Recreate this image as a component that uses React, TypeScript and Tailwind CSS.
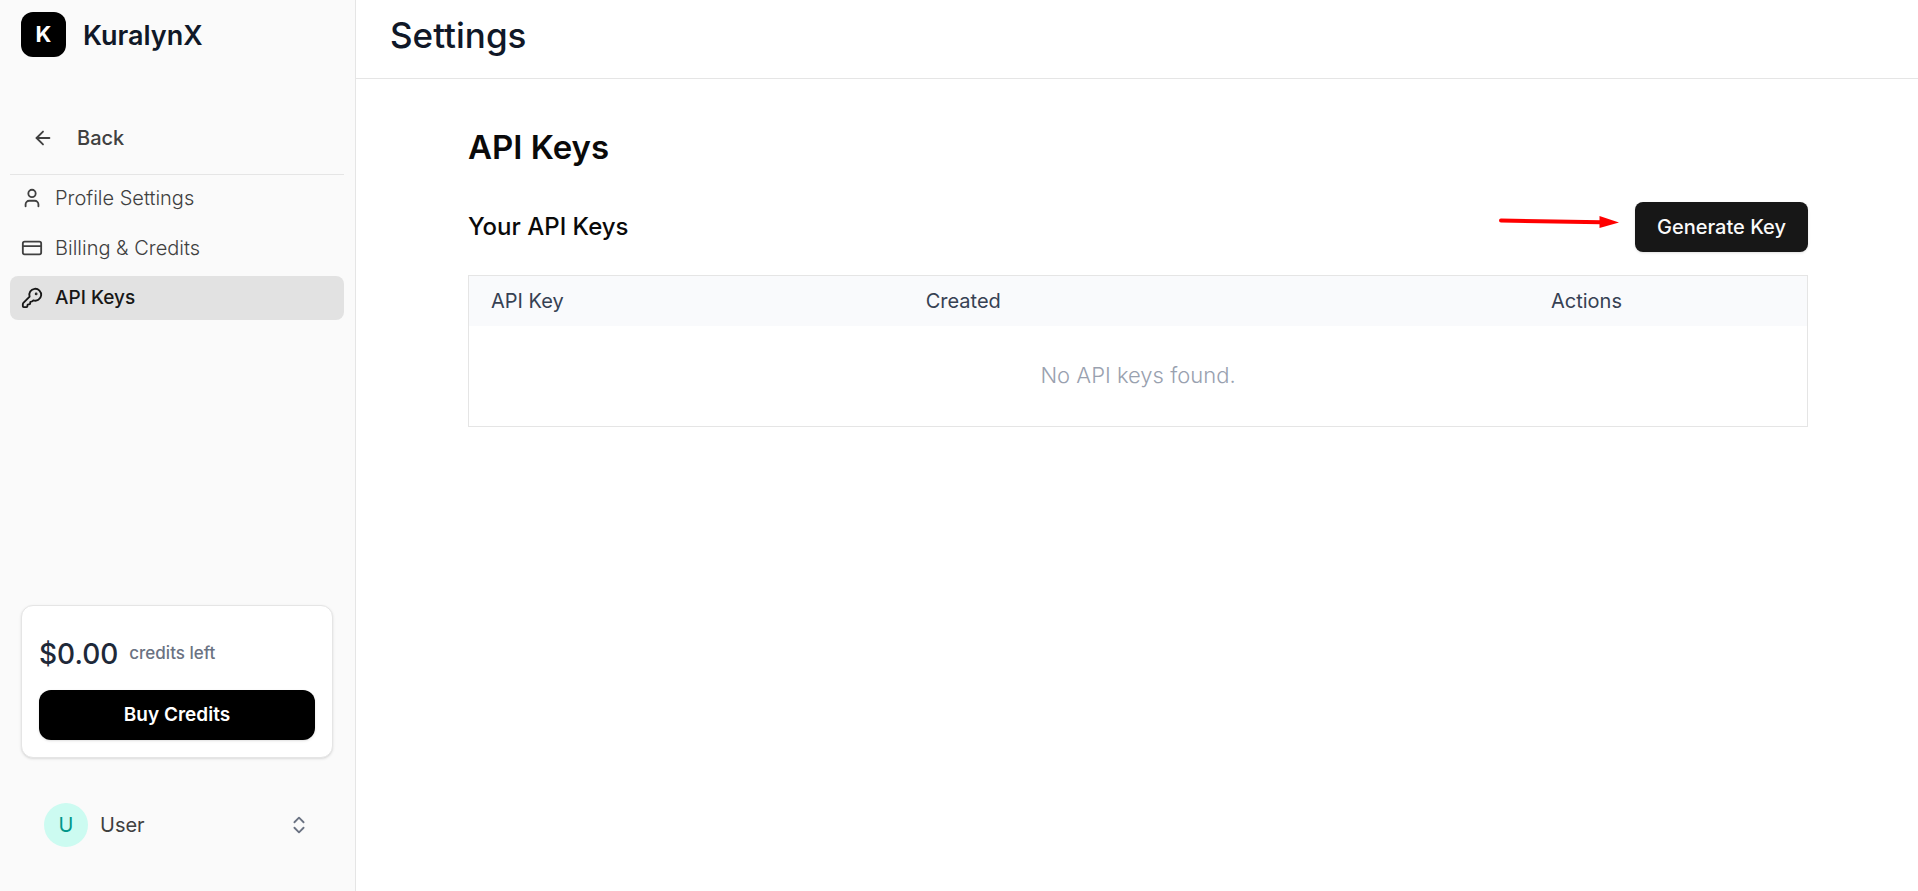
import { ArrowLeft, ChevronsUpDown, CreditCard, KeyRound, User } from "lucide-react";
import type { LucideIcon } from "lucide-react";

type NavItem = { label: string; icon: LucideIcon; active?: boolean };

const navItems: NavItem[] = [
  { label: "Profile Settings", icon: User },
  { label: "Billing & Credits", icon: CreditCard },
  { label: "API Keys", icon: KeyRound, active: true },
];

function NavLink({ label, icon: Icon, active }: NavItem) {
  return (
    <a
      href="#"
      aria-current={active ? "page" : undefined}
      className={
        active
          ? "flex h-11 items-center gap-3 rounded-lg bg-[#e2e2e2] px-[11px] text-[19px] font-medium text-neutral-900"
          : "flex h-11 items-center gap-3 rounded-lg px-[11px] text-[20px] font-light text-neutral-700"
      }
    >
      <Icon size={22} strokeWidth={2} />
      <span>{label}</span>
    </a>
  );
}

function Sidebar() {
  return (
    <aside className="flex w-[356px] shrink-0 flex-col border-r border-neutral-200 bg-neutral-50">
      <div className="flex items-center gap-[17px] px-[21px] pt-3">
        <div className="flex size-[45px] items-center justify-center rounded-xl bg-black text-[22px] font-bold text-white">
          K
        </div>
        <span className="pt-1 text-[27px] font-semibold text-gray-900">KuralynX</span>
      </div>

      <nav className="mt-[59px] pr-[11px] pl-[10px]">
        <a href="#" className="flex h-11 items-center gap-[23px] px-[22px] text-[20px] font-medium text-neutral-700">
          <ArrowLeft size={22} strokeWidth={2} />
          <span>Back</span>
        </a>
        <div className="mt-3.5 border-t border-neutral-200" />
        <div className="mt-px flex flex-col gap-1.5">
          {navItems.map((item) => (
            <NavLink key={item.label} {...item} />
          ))}
        </div>
      </nav>

      <div className="mt-auto pr-[22px] pb-11 pl-[21px]">
        <section className="rounded-xl border border-neutral-200 bg-white px-[17px] pt-7 pb-[17px] shadow-sm">
          <p className="flex h-10 items-center gap-[11px]">
            <span className="text-[28px] font-medium text-gray-800">$0.00</span>
            <span className="text-[17px] font-medium text-gray-500">credits left</span>
          </p>
          <button
            type="button"
            className="mt-4 h-[50px] w-full rounded-xl bg-black text-[19px] font-semibold text-white shadow-sm"
          >
            Buy Credits
          </button>
        </section>

        <button type="button" className="mt-[45px] flex w-full items-center px-[23px] text-left">
          <span className="flex size-11 items-center justify-center rounded-full bg-[#ccfbf1] text-[20px] text-teal-600">
            U
          </span>
          <span className="ml-3 text-[20px] text-neutral-700">User</span>
          <ChevronsUpDown size={22} strokeWidth={2} className="ml-auto text-gray-500" />
        </button>
      </div>
    </aside>
  );
}

function PointerArrow() {
  return (
    <svg width="120" height="14" viewBox="0 0 120 14" className="mb-2.5" aria-hidden="true">
      <path d="M2 5.5 L102 7.3" stroke="#ff0000" strokeWidth="4" strokeLinecap="round" />
      <path d="M100.500 1 L120 7.500 L100.500 13 Z" fill="#ff0000" />
    </svg>
  );
}

function KeysTable() {
  return (
    <table className="w-full table-fixed border border-neutral-200 text-left">
      <thead className="bg-[#f9fafc] text-[20px] text-gray-700">
        <tr className="h-[50px]">
          <th scope="col" className="w-[32.5%] px-[22px] font-normal">API Key</th>
          <th scope="col" className="w-[46.7%] px-[22px] font-normal">Created</th>
          <th scope="col" className="px-[22px] font-normal">Actions</th>
        </tr>
      </thead>
      <tbody>
        <tr className="h-[101px]">
          <td colSpan={3} className="text-center text-[22px] font-light text-gray-400">
            No API keys found.
          </td>
        </tr>
      </tbody>
    </table>
  );
}

export default function App() {
  return (
    <div className="flex min-h-screen bg-white font-['Inter',sans-serif]">
      <Sidebar />
      <main className="min-w-0 flex-1">
        <header className="flex h-[79px] items-center border-b border-neutral-200 px-[34px] pb-2">
          <h1 className="text-[35px] font-medium text-gray-900">Settings</h1>
        </header>
        <div className="pt-11 pr-[110px] pl-28">
          <h2 className="text-[33px] leading-12 font-semibold text-neutral-950">API Keys</h2>
          <div className="mt-[31px] flex items-center justify-between">
            <h3 className="text-[24px] font-medium text-neutral-950">Your API Keys</h3>
            <div className="flex items-center gap-4">
              <PointerArrow />
              <button
                type="button"
                className="h-[50px] rounded-lg bg-neutral-900 px-[22px] text-[20px] font-medium text-neutral-50 shadow-sm"
              >
                Generate Key
              </button>
            </div>
          </div>
          <div className="mt-[23px]">
            <KeysTable />
          </div>
        </div>
      </main>
    </div>
  );
}
